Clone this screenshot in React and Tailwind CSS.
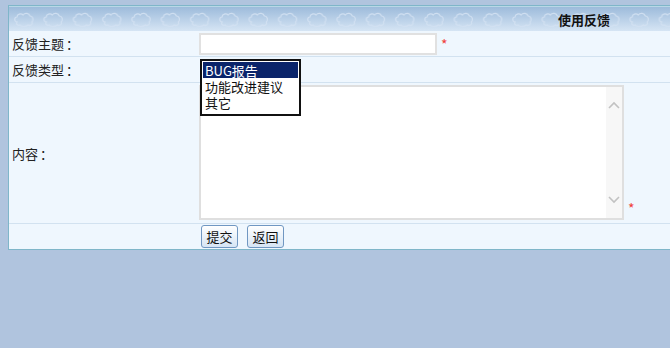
import React from 'react';

const font = { fontFamily: '"Noto Sans CJK SC", "Noto Sans", sans-serif' };

function Clouds() {
  return (
    <svg className="absolute inset-0 w-full h-full" aria-hidden="true">
      <defs>
        <pattern id="clouds" x="5" y="0" width="29.3" height="25" patternUnits="userSpaceOnUse">
          <path
            d="M3,15 C0,15 0,10 3,10 C3,7 7,6 9,8 C11,5.5 15,6 16,9 C19,9 20,13 18,15 C19,17.5 16,19.5 14,18 C12,20 7,20 6,18 C4,19 1.5,17.5 3,15 Z"
            fill="none"
            stroke="#d3e2f2"
            strokeOpacity="0.9"
            strokeWidth="1.2"
          />
        </pattern>
      </defs>
      <rect width="100%" height="100%" fill="url(#clouds)" />
    </svg>
  );
}

function Star() {
  return <span className="text-[14px] leading-none text-[#f0403a] ml-[4px]">*</span>;
}

function Chevron({ up }) {
  return (
    <svg width="12" height="8" viewBox="0 0 12 8">
      <path d={up ? 'M1,7 L6,2 L11,7' : 'M1,1 L6,6 L11,1'} fill="none" stroke="#c2c2c2" strokeWidth="1.6" />
    </svg>
  );
}

function Label({ children }) {
  return (
    <div className="flex items-center pl-[3px] leading-none">
      {children}
      <span className="ml-[2px]">：</span>
    </div>
  );
}

export default function App() {
  const options = ['BUG报告', '功能改进建议', '其它'];

  return (
    <div className="w-[670px] h-[348px] bg-[#b0c4de] pt-[5px] pl-[8px] overflow-hidden" style={font}>
      <div className="border-l border-t border-b border-[#7fb6c9] bg-[#eff7fe] text-[13px] text-[#222]">
        {/* header */}
        <div className="relative h-[25px] bg-gradient-to-b from-[#9dbbdb] to-[#d6e5f4] border-t border-[#b8d8e6] flex items-center justify-end pr-[60px]">
          <Clouds />
          <span className="relative font-bold text-[13px] leading-none text-[#111]">使用反馈</span>
        </div>

        {/* 反馈主题 */}
        <div className="grid grid-cols-[189px_1fr] h-[26px] border-b border-[#d2e2f0]">
          <Label>反馈主题</Label>
          <div className="flex items-center">
            <div className="ml-[1px] w-[238px] h-[22px] bg-white border-2 border-[#e1e1e1]" />
            <Star />
          </div>
        </div>

        {/* 反馈类型 */}
        <div className="grid grid-cols-[189px_1fr] h-[26px] border-b border-[#d2e2f0]">
          <Label>反馈类型</Label>
          <div className="relative">
            <div className="absolute z-10 left-[2px] top-[2px] w-[101px] bg-white border-2 border-[#111] pt-[1px] pb-[4px] px-[1px]">
              {options.map((o, i) => (
                <div
                  key={o}
                  className={
                    'h-[16px] flex items-center pl-[2px] leading-none text-[13px] ' +
                    (i === 0 ? 'bg-[#0a246a] text-white' : 'text-[#111]')
                  }
                >
                  {o}
                </div>
              ))}
            </div>
          </div>
        </div>

        {/* 内容 */}
        <div className="grid grid-cols-[189px_1fr] h-[141px] border-b border-[#d2e2f0]">
          <Label>内容</Label>
          <div className="flex items-end pt-[2px] pb-[4px]">
            <div className="ml-[1px] w-[425px] h-[135px] bg-white border-2 border-[#dfdfdf] flex justify-end">
              <div className="w-[16px] h-full bg-[#f7f7f7] flex flex-col items-center justify-between py-[14px]">
                <Chevron up />
                <Chevron />
              </div>
            </div>
            <div className="pb-[2px]">
              <Star />
            </div>
          </div>
        </div>

        {/* buttons */}
        <div className="grid grid-cols-[189px_1fr] h-[25px]">
          <div />
          <div className="flex items-center gap-[9px] pl-[3px]">
            {['提交', '返回'].map((b) => (
              <button
                key={b}
                className="w-[37px] h-[23px] rounded-[3px] border border-[#7097c2] bg-gradient-to-b from-white to-[#d6e5f4] text-[13px] leading-none text-[#111]"
                style={font}
              >
                {b}
              </button>
            ))}
          </div>
        </div>
      </div>
    </div>
  );
}
